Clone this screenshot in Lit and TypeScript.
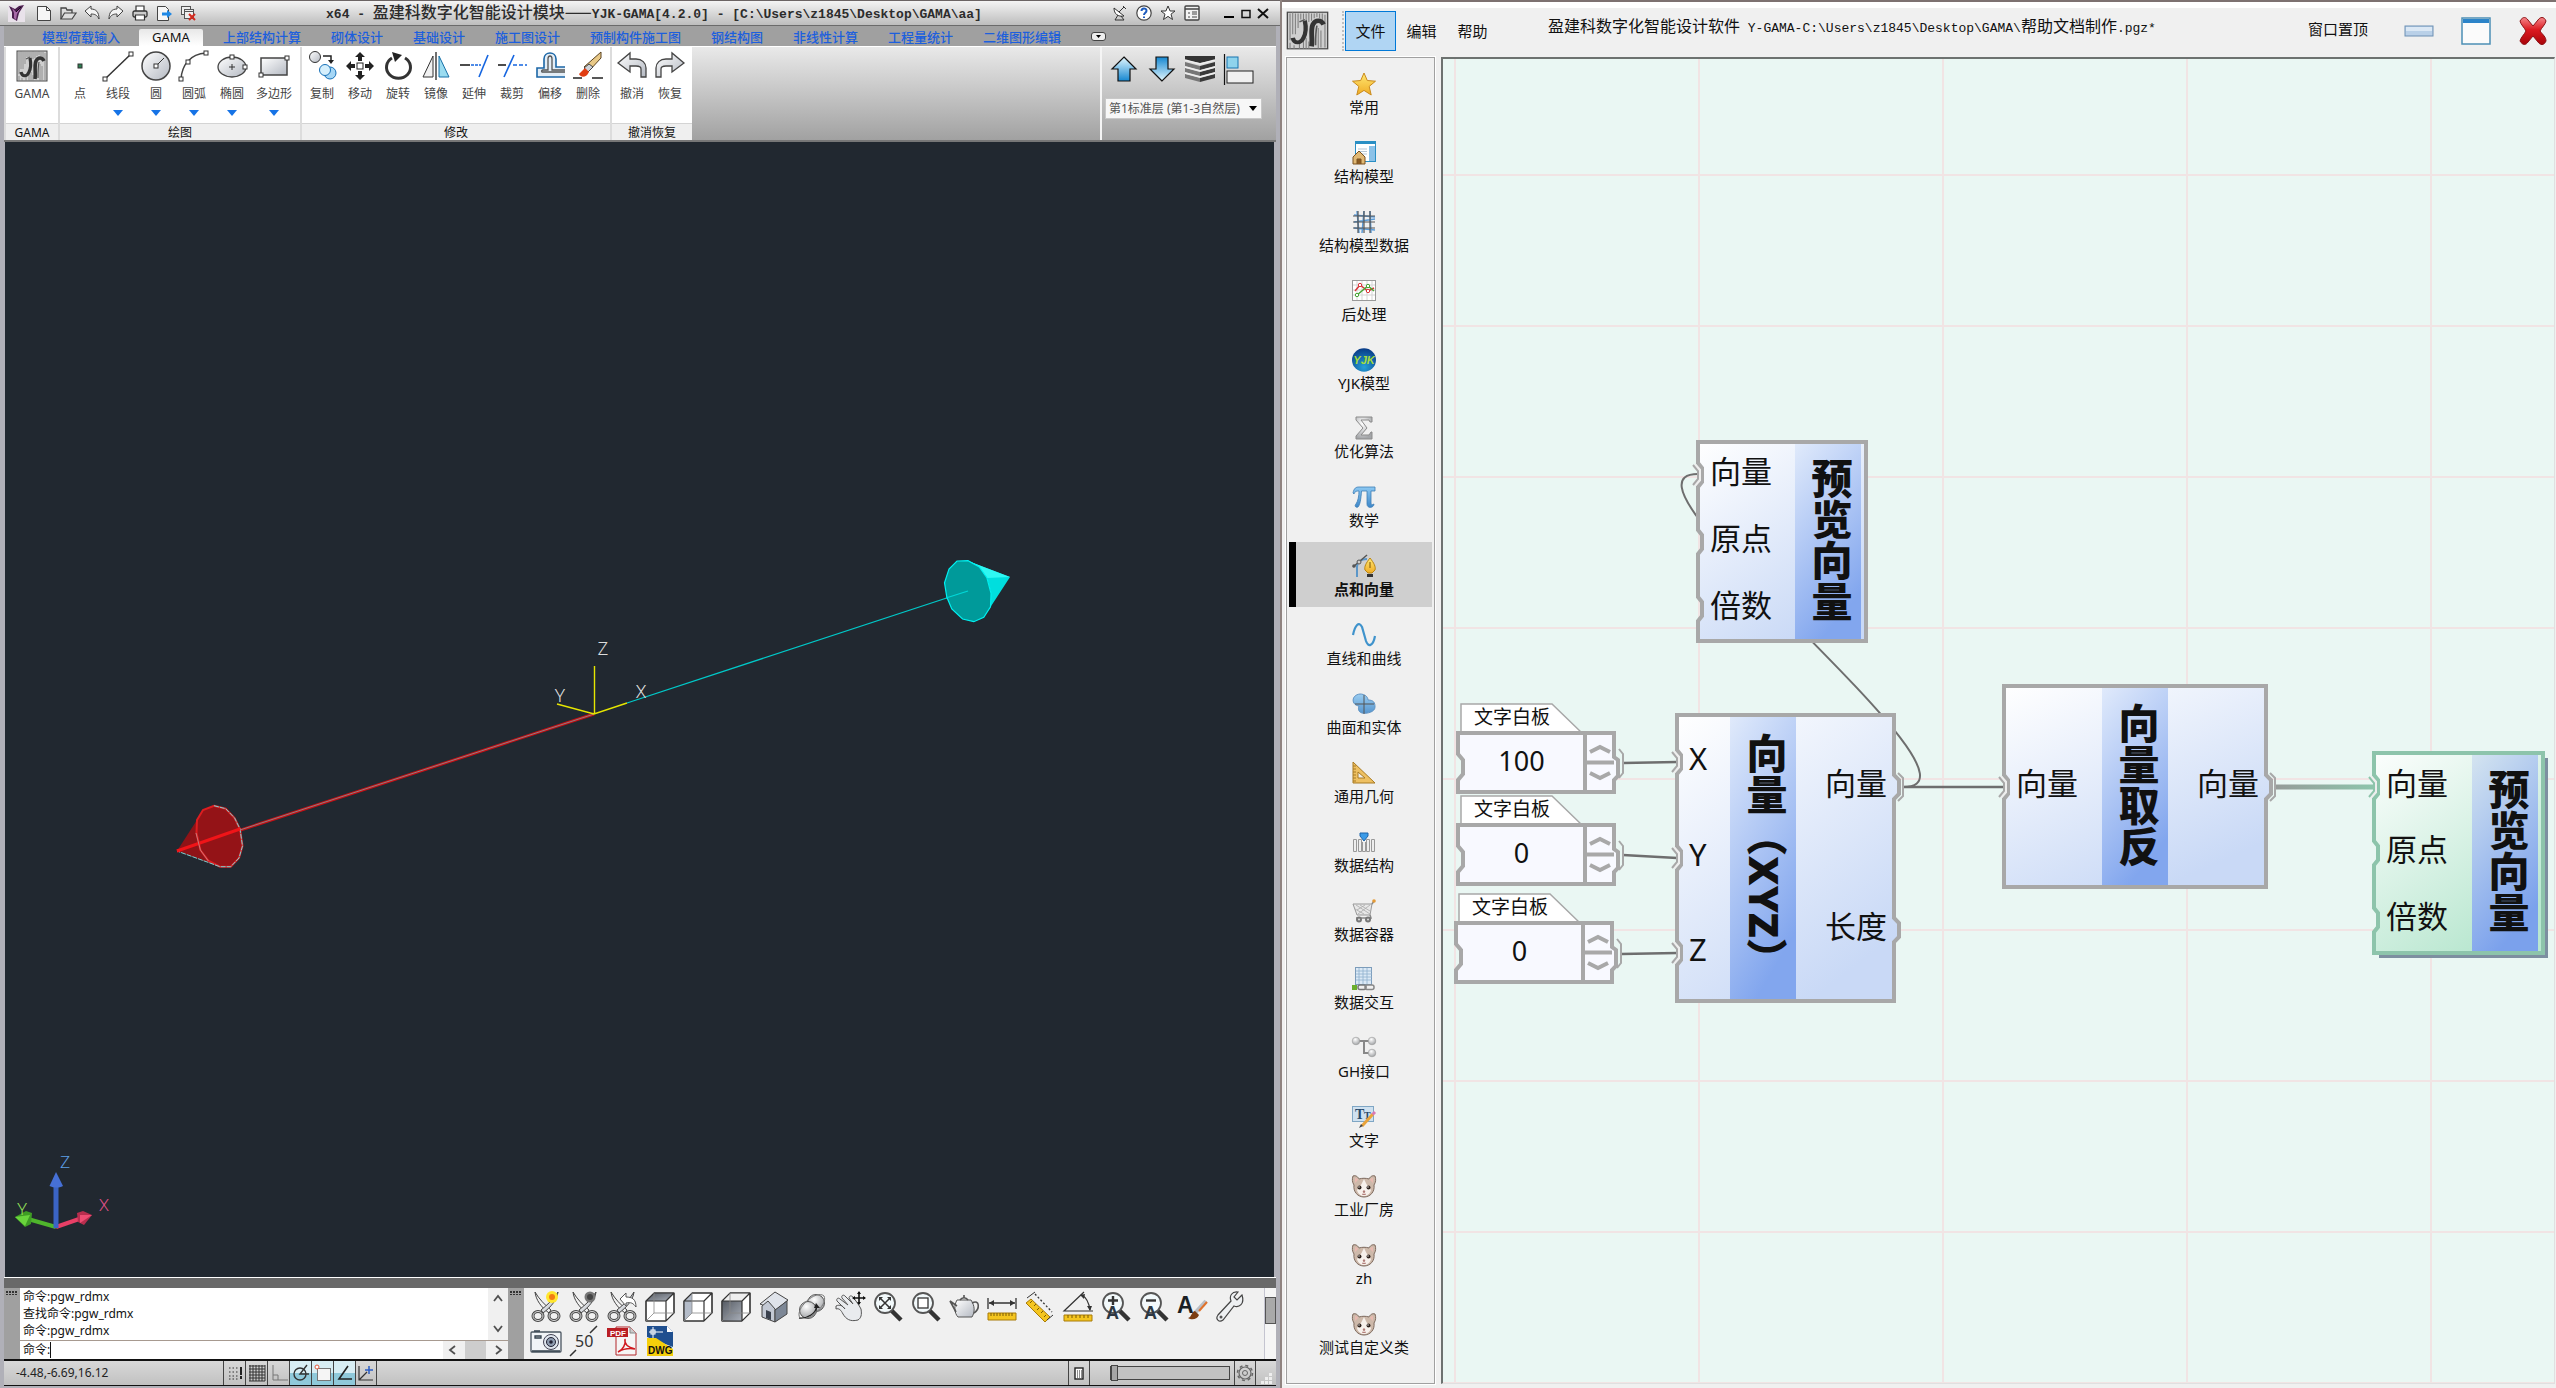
import { LitElement, html, svg, css, nothing, TemplateResult } from "lit";
import { customElement, state } from "lit/decorators.js";
import { classMap } from "lit/directives/class-map.js";
import { styleMap } from "lit/directives/style-map.js";

type Art = TemplateResult;

const icon = (size: number, art: Art, box = size): Art =>
  html`<svg class="ico" width=${size} height=${size} viewBox="0 0 ${box} ${box}" fill="none" aria-hidden="true">${art}</svg>`;

/* ---------- shared gradients, repeated in each shadow tree that needs them ---------- */
const defs = html`<svg class="defs" width="0" height="0" aria-hidden="true">
  <defs>
    <linearGradient id="steel" x1="0" y1="0" x2="1" y2="1"><stop offset="0" stop-color="#fff" /><stop offset="1" stop-color="#b4b9c2" /></linearGradient>
    <linearGradient id="aqua" x1="0" y1="0" x2="0" y2="1"><stop offset="0" stop-color="#e4f8ff" /><stop offset="1" stop-color="#1587d0" /></linearGradient>
    <linearGradient id="aquaDown" x1="0" y1="0" x2="0" y2="1"><stop offset="0" stop-color="#1587d0" /><stop offset="1" stop-color="#e4f8ff" /></linearGradient>
    <linearGradient id="gold" x1="0" y1="0" x2="0" y2="1"><stop offset="0" stop-color="#ffe873" /><stop offset="1" stop-color="#f0ac25" /></linearGradient>
    <linearGradient id="sky" x1="0" y1="0" x2="0" y2="1"><stop offset="0" stop-color="#8cc8f2" /><stop offset="1" stop-color="#3d87c9" /></linearGradient>
    <linearGradient id="dark" x1="0" y1="0" x2="1" y2="1"><stop offset="0" stop-color="#555a62" /><stop offset="1" stop-color="#a9afb9" /></linearGradient>
    <linearGradient id="ruby" x1="0" y1="0" x2="0" y2="1"><stop offset="0" stop-color="#f5868a" /><stop offset=".45" stop-color="#dc1a20" /><stop offset="1" stop-color="#a80409" /></linearGradient>
    <radialGradient id="globe" cx=".5" cy=".8" r=".8"><stop offset="0" stop-color="#25a0d8" /><stop offset="1" stop-color="#083a86" /></radialGradient>
    <radialGradient id="ball" cx=".4" cy=".3" r=".7"><stop offset="0" stop-color="#fff" /><stop offset="1" stop-color="#a3a5a8" /></radialGradient>
  </defs>
</svg>`;

/* ---------- brush lettering mark used by the GAMA tool ---------- */
const mark = svg`
  <rect x="1" y="1" width="30" height="30" fill="#cfcfcf" stroke="#4a4a4a" />
  <path d="M3 2v22M5 1v18M7 2v17M9 2v12M11 2v5M13 2v5M15 2v7M17 1v8M19 2v6M21 2v4M23 1v4M25 2v4M27 2v6M29 3v27M3 26v5M6 28v3M10 27v4M13 24v7M15 22v9M17 25v6M24 14v17M26 16v14" stroke="#808080" stroke-width=".8" />
  <path d="M14 8c1 5 1 10-1 14-2 5-7 5-8 0" stroke="#333" stroke-width="3.200" />
  <path d="M19 29c1-6-1-13 1-18 2-4 6-4 8 0" stroke="#333" stroke-width="3.600" />
  <path d="M10 9l4-2M22 28c0-6 0-11 1-16" stroke="#555" stroke-width="1.200" />`;

/* ---------- 16px title bar glyphs ---------- */
const g = {
  logo: svg`<rect width="17" height="17" fill="#e9e2ea" /><path d="M1 1l6 3 4-3 5-1-5 8-2 8-5-3 0-6z" fill="#4b1f4e" /><path d="M4 3l4 4 5-5-4 7-1 6-2-2 0-5z" fill="#a86ba8" /><path d="M8 7l5-5" stroke="#1d0b20" />`,
  file: svg`<path d="M1.500 1.500h9l4 4v10h-13z" fill="#f6f6f6" stroke="#444" /><path d="M10.500 1.500v4h4" stroke="#444" />`,
  open: svg`<path d="M1 14V3h5l1 2h5v3" stroke="#444" stroke-width="1.300" /><path d="M1 14l3.500-6H16l-4 6z" fill="#ddd" stroke="#444" stroke-width="1.200" />`,
  undo: svg`<path d="M1 6l6-5v3c5 0 8 3 8 10-2-4-4-5-8-5v3z" fill="#f4f4f4" stroke="#444" />`,
  redo: svg`<path d="M15 6L9 1v3c-5 0-8 3-8 10 2-4 4-5 8-5v3z" fill="#f4f4f4" stroke="#444" />`,
  print: svg`<path d="M4 6V1h8v5" fill="#fff" stroke="#333" stroke-width="1.200" /><rect x="1" y="6" width="14" height="6" rx="1.500" fill="#ccc" stroke="#333" stroke-width="1.300" /><path d="M3.500 10h9v5h-9z" fill="#fff" stroke="#333" stroke-width="1.200" />`,
  send: svg`<path d="M1.500 1.500h8l3 3v11h-11z" fill="#f6f6f6" stroke="#444" /><path d="M6 7.500h5V5l5 4-5 4v-2.500H6z" fill="#1e88e5" />`,
  drop: svg`<rect x="1.500" y="1.500" width="9" height="8" fill="#eee" stroke="#555" /><rect x="4.500" y="4.500" width="9" height="9" fill="#eee" stroke="#555" /><path d="M4 6.500h9" stroke="#555" /><path d="M9 9l6 6M15 9l-6 6" stroke="#d32a1e" stroke-width="2" />`,
  dish: svg`<path d="M2 3c0 6 4 9 10 8z" fill="#fff" stroke="#333" /><path d="M7 7l5-5M11 1l3 3M6 10l-3 5h9l-3-4" stroke="#333" />`,
  help: svg`<circle cx="8" cy="8" r="7.200" fill="#fff" stroke="#444" stroke-width="1.200" /><path d="M5.500 6c0-3.500 5-3.300 5-.3 0 2-2.500 2-2.500 4.300M8 11.500v1.600" stroke="#1d5bbd" stroke-width="2" />`,
  star: svg`<path d="M8 1l2.100 5H15l-4 3.200 1.500 5.300L8 11.400l-4.500 3.100L5 9.200 1 6h4.900z" fill="#fff" stroke="#333" />`,
  pane: svg`<rect x="1" y="1" width="14" height="14" rx="1" fill="#f3f3f3" stroke="#444" stroke-width="1.400" /><path d="M1 4h14" stroke="#444" stroke-width="1.500" /><path d="M4 8h2M4 12h2M8 7h5M8 9h5M8 12h5" stroke="#444" />`,
};

/* ---------- 32px ribbon tools ---------- */
const node4 = (x: number, y: number) => svg`<rect x=${x - 2} y=${y - 2} width="4" height="4" fill="#fff" stroke="#333" />`;
const r = {
  point: svg`<rect x="14" y="14" width="4" height="4" fill="#2c8052" stroke="#333" />`,
  line: svg`<path d="M3 29L29 4" stroke="#333" stroke-width="1.500" />${node4(3, 29)}${node4(29, 4)}`,
  circle: svg`<circle cx="16" cy="16" r="14" fill="url(#steel)" stroke="#444" stroke-width="1.500" /><path d="M16 16l8-8" stroke="#333" />${node4(16, 16)}`,
  arc: svg`<path d="M3 29C4 15 12 4 28 3" stroke="#444" stroke-width="1.500" />${node4(3, 29)}${node4(10, 12)}${node4(28, 3)}`,
  ellipse: svg`<ellipse cx="16" cy="17" rx="14" ry="10" fill="url(#steel)" stroke="#444" stroke-width="1.300" /><path d="M13 17h6M16 14v6" stroke="#333" />${node4(16, 7)}${node4(29, 17)}`,
  rect: svg`<rect x="3" y="8" width="26" height="17" fill="url(#steel)" stroke="#444" stroke-width="1.500" />${node4(29, 8)}${node4(3, 25)}`,
  copy: svg`<circle cx="9" cy="7" r="5.500" fill="url(#steel)" stroke="#333" /><path d="M17 6h8v6" stroke="#222" stroke-width="1.500" /><path d="M22 10h6l-3 4z" fill="#222" /><circle cx="24" cy="23" r="6" fill="#a5d6f5" stroke="#1670b8" /><circle cx="19" cy="20" r="5.500" fill="#d5effc" stroke="#1670b8" />`,
  move: svg`<rect x="13" y="13" width="6" height="6" fill="#fff" stroke="#222" /><path d="M16 2l5 5h-3v4h-4V7h-3zM16 30l5-5h-3v-4h-4v4h-3zM2 16l5-5v3h4v4H7v3zM30 16l-5-5v3h-4v4h4v3z" fill="#222" />`,
  rotate: svg`<path d="M10 8a12 11 0 1 0 13 0" stroke="#333" stroke-width="3" /><path d="M10 2l10 3-7 7z" fill="#222" />`,
  mirror: svg`<path d="M13 6v21H3z" fill="#f1f1f1" stroke="#333" /><path d="M16 2v28" stroke="#222" stroke-width="1.300" /><path d="M19 6v21h10z" fill="#9bdcf0" stroke="#1670a8" />`,
  extend: svg`<path d="M2 15h10" stroke="#111" stroke-width="1.500" /><path d="M13 15h10" stroke="#1565e0" stroke-width="1.500" stroke-dasharray="3 1" /><path d="M30 5l-9 22" stroke="#1565e0" stroke-width="1.600" />`,
  trim: svg`<path d="M2 15h8" stroke="#111" stroke-width="1.500" /><path d="M17 15h14" stroke="#1565e0" stroke-width="1.500" stroke-dasharray="4 2" /><path d="M18 5L8 27" stroke="#1565e0" stroke-width="1.600" />`,
  offset: svg`<path d="M31 27H3v-9h7V9c0-8 12-8 12 0v8h9" fill="#e3edf6" stroke="#1b66a6" stroke-width="1.600" /><path d="M31 22H8c-1-1 0-2 1-2h5V9c0-4 4-4 4 0v11h13" stroke="#555" stroke-width="1.300" />`,
  erase: svg`<path d="M1 28h9M20 28h11" stroke="#222" stroke-width="1.600" /><path d="M29 2v6L17 21l-5-4z" fill="#e9c987" stroke="#5b4320" /><path d="M17 14l4 3-5 5-4-4z" fill="#cfd3d8" stroke="#444" /><path d="M13 18l4 4c-3 6-8 6-10 2z" fill="#e13d12" />`,
  undo: svg`<path d="M2 13L14 3v6h6c6 0 10 4 10 9v9h-5v-8c0-3-3-3-5-3h-6v6z" fill="url(#steel)" stroke="#444" stroke-width="1.300" />`,
  redo: svg`<path d="M30 13L18 3v6h-6c-6 0-10 4-10 9v9h5v-8c0-3 3-3 5-3h6v6z" fill="url(#steel)" stroke="#444" stroke-width="1.300" />`,
  up: svg`<path d="M16 4l12 12h-6v12H10V16H4z" fill="url(#aqua)" stroke="#111" stroke-width="1.200" />`,
  down: svg`<path d="M16 28L4 16h6V4h12v12h6z" fill="url(#aquaDown)" stroke="#111" stroke-width="1.200" />`,
  floors: svg`<path d="M1 3h30v4l-15 3L1 7z" fill="#333" /><path d="M1 9l15 4v4L1 13zM1 15l15 4v4L1 19zM1 21l15 4v4L1 25z" fill="#777" /><path d="M31 9l-15 4v4l15-4zM31 15l-15 4v4l15-4zM31 21l-15 4v4l15-4z" fill="#3a3a3a" /><path d="M1 7l15 4 15-4M1 14l15 4 15-4M1 20l15 4 15-4" stroke="#eee" stroke-width="1.600" />`,
  align: svg`<path d="M2.500 1v31" stroke="#111" stroke-width="1.200" /><rect x="5" y="4" width="11" height="11" fill="#8fd3ec" stroke="#1774b0" /><rect x="5" y="18" width="26" height="12" fill="#f0f0f0" stroke="#222" />`,
};

/* ---------- 32px view toolbar ---------- */
const shears = svg`<path d="M5 1c1 8 6 15 14 21l2-3C15 14 9 8 5 1z" fill="#f2f2f2" stroke="#444" /><path d="M28 1c-1 8-7 15-15 21l-2-3C17 14 24 8 28 1z" fill="url(#steel)" stroke="#444" /><ellipse cx="8" cy="25" rx="5" ry="4.500" stroke="#444" stroke-width="3" /><ellipse cx="8" cy="25" rx="5" ry="4.500" stroke="#ddd" /><ellipse cx="24" cy="25" rx="5" ry="4.500" stroke="#444" stroke-width="3" /><ellipse cx="24" cy="25" rx="5" ry="4.500" stroke="#ddd" />`;
const cube = (top: string, left: string, front: string) => svg`<path d="M2 10l8-8h20v20l-8 8H2z" fill="#fff" stroke="#333" /><path d="M2 10l8-8h20l-8 8z" fill=${top} /><path d="M2 10l8-8v20l-8 8z" fill=${left} /><path d="M2 10h20v20H2z" fill=${front} /><path d="M2 10l8-8h20v20l-8 8H2zM2 10h20v20M22 10l8-8" stroke="#333" stroke-width="1.200" /><path d="M10 2v20h20M10 22l-8 8" stroke="#888" stroke-width=".8" />`;
const lens = svg`<path d="M19 19l10 10" stroke="#333" stroke-width="4.500" /><circle cx="13" cy="12" r="10" fill="#f2f9fb" stroke="#555" stroke-width="1.800" />`;
const rule = svg`<path d="M2 22h28v7H2z" fill="#f4c51f" stroke="#a87b08" /><path d="M5 22v3M8 22v3M11 22v3M14 22v3M17 22v3M20 22v3M23 22v3M26 22v3" stroke="#7a5a05" />`;
const bigA = (x: number, y: number, s: number, c: string) => svg`<text x=${x} y=${y} font-family="Liberation Sans" font-size=${s} font-weight="700" fill=${c}>A</text>`;
const v = {
  cutNew: svg`${shears}<circle cx="22" cy="6" r="6" fill="#ffe62e" /><circle cx="22" cy="6" r="3" fill="#f37d12" />`,
  cutGray: svg`${shears}<circle cx="22" cy="6" r="5.500" fill="#777" /><circle cx="22" cy="6" r="3" fill="#444" />`,
  cutBack: svg`${shears}<path d="M14 8l6-6v4c6 0 10 2 10 10-3-4-5-5-10-4v3z" fill="#fff" stroke="#555" />`,
  top: cube("url(#dark)", "none", "none"),
  left: cube("none", "#b4bcc9", "none"),
  front: cube("#eee", "#eee", "url(#dark)"),
  home: svg`<path d="M2 13L17 1l13 8-12 10z" fill="#dfe3ea" stroke="#444" /><path d="M4 15v11l13 5V18L10 10z" fill="#c3c9d4" stroke="#444" /><path d="M17 19l12-9v13l-12 8z" fill="#7d8796" stroke="#444" /><path d="M8 19l5 2v8l-5-2z" fill="#3a414d" />`,
  orbit: svg`<circle cx="20" cy="12" r="8.500" fill="url(#ball)" stroke="#555" /><circle cx="12" cy="19" r="8.500" fill="url(#ball)" stroke="#555" /><path d="M3 27c9 1 17-5 18-12" stroke="#222" stroke-width="1.400" /><path d="M20 12l-2 5 6 0z" fill="#222" /><path d="M4 27C-2 18 20-2 28 5c4 8-12 22-18 22" stroke="#777" />`,
  pan: svg`<path d="M2 15c4-2 7 0 9 3L3 10c-1-2 1-4 3-2l8 6-6-7c-1-2 1-4 3-2l8 8-4-6c0-2 2-3 4-1 3 4 6 8 8 12 1 6 0 9-3 11-8 2-12-1-15-6-2-4-4-6-7-5z" fill="#e9ebee" stroke="#555" /><path d="M25 1v12M19 7h12" stroke="#111" stroke-width="1.600" /><path d="M25 0l-2 3h4zM25 14l-2-3h4zM18 7l3-2v4zM32 7l-3-2v4z" fill="#111" />`,
  fit: svg`${lens}<path d="M8 7l10 10M18 7L8 17" stroke="#333" stroke-width="1.500" /><path d="M7 6h4l-4 4zM19 6h-4l4 4zM7 18h4l-4-4zM19 18h-4l4-4z" fill="#333" />`,
  zoomBox: svg`${lens}<rect x="8" y="7" width="10" height="10" fill="#fff" stroke="#333" stroke-width="1.300" />`,
  pot: svg`<path d="M9 9h14c4 6 4 12 1 17H10C6 22 6 14 9 9z" fill="url(#steel)" stroke="#555" /><path d="M9 15L2 10l6 11M24 12c8-4 8 6 2 10" stroke="#555" stroke-width="1.600" /><path d="M12 9c2-3 6-3 8 0M16 4v3" stroke="#555" stroke-width="1.600" />`,
  span: svg`${rule}<path d="M2 7v11M30 7v11M3 12h26" stroke="#333" stroke-width="1.300" /><path d="M3 12l5-3v6zM29 12l-5-3v6z" fill="#333" />`,
  slant: svg`<path d="M2 12l5-4 19 18-5 5z" fill="#f4c51f" stroke="#a87b08" /><path d="M6 12l2-2M10 15l2-2M13 19l2-2M17 22l2-2M20 26l2-2" stroke="#7a5a05" /><path d="M3 7l8-6M23 29l6-5" stroke="#333" /><path d="M11 3l17 18" stroke="#333" stroke-dasharray="2 2" stroke-width="1.300" />`,
  angle: svg`<path d="M2 24h28v6H2z" fill="#f4c51f" stroke="#a87b08" /><path d="M6 24v3M10 24v3M14 24v3M18 24v3M22 24v3M26 24v3" stroke="#7a5a05" /><path d="M31 20H2L22 1M20 4c5 3 7 8 8 15" stroke="#333" stroke-width="1.200" /><path d="M18 4l5-1-1 5zM28 20l-3-5h5z" fill="#333" />`,
  bigger: svg`${lens}<path d="M13 5v9M8 9.500h10" stroke="#333" stroke-width="2.400" />${bigA(6, 28, 18, "#2c3742")}`,
  smaller: svg`${lens}<path d="M8 9.500h10" stroke="#333" stroke-width="2.400" />${bigA(6, 28, 18, "#2c3742")}`,
  style: svg`${bigA(1, 22, 23, "#1b1f24")}<path d="M30 10L19 22" stroke="#b9bec5" stroke-width="4" /><path d="M31 11l-8 9" stroke="#e0712a" stroke-width="2" /><path d="M19 20l4 4c-2 5-8 5-11 3 4-1 3-6 7-7z" fill="#7c3d12" />`,
  wrench: svg`<path d="M28 4l-5 5-3-3 4-5c-6-1-9 4-7 9L4 24c-3 4 1 8 5 5l11-14c5 2 11-2 8-11z" fill="#eef0f2" stroke="#444" stroke-width="1.200" /><circle cx="7" cy="26" r="1.500" fill="#555" />`,
  camera: svg`<rect x="1" y="7" width="30" height="20" rx="1" fill="#f1f4f7" stroke="#4a5560" stroke-width="1.300" /><path d="M4 6h6M5 11h6v2H5zM2 26h28" stroke="#33404c" stroke-width="1.300" /><circle cx="21" cy="17" r="7.500" fill="#dfe6ee" stroke="#445" /><circle cx="21" cy="17" r="4.500" fill="#8e9cb0" stroke="#223" /><circle cx="21" cy="17" r="1.800" fill="#223" />`,
  fifty: svg`<path d="M22 8l7-7M2 31l6-6" stroke="#333" stroke-width="1.500" /><text x="7" y="22" font-family="Noto Sans" font-size="16" fill="#333">50</text>`,
  pdf: svg`<path d="M10 2h14l6 6v22H10z" fill="#f5f5f5" stroke="#b3262b" /><path d="M24 2v6h6" fill="#ccc" stroke="#888" /><path d="M1 3h21v9H1z" fill="#b91e24" /><text x="4" y="11" font-family="Liberation Sans" font-size="8" font-weight="700" fill="#fff">PDF</text><path d="M12 27c5-2 8-8 7-13-1 6 5 9 10 10-6-1-12 0-17 3z" stroke="#d0191f" stroke-width="1.500" />`,
  dwg: svg`<path d="M3 1h20l6 6v15L3 12z" fill="#1f4f8f" /><path d="M3 13h9l17 11v7H3z" fill="#f5cf0b" /><path d="M5 7h14M9 2v11" stroke="#fff" /><rect x="7" y="5" width="4" height="4" stroke="#fff" /><path d="M23 1v6h6z" fill="#fff" /><text x="4" y="29" font-family="Liberation Sans" font-size="10" font-weight="700" fill="#111">DWG</text>`,
};

/* ---------- 18px status toggles ---------- */
const s = {
  snap: svg`<path d="M3 4h9M3 8h9M3 12h9M3 15h9" stroke="#333" stroke-width="1.200" stroke-dasharray="1.500 2" /><path d="M15 3v12" stroke="#222" stroke-width="2" stroke-dasharray="8 1" />`,
  grid: svg`<path d="M1 2h16M1 5h16M1 8h16M1 11h16M1 14h16M1 17h16M2 1v16M5 1v16M8 1v16M11 1v16M14 1v16M17 1v16" stroke="#333" />`,
  ortho: svg`<path d="M3 1v15h15M3 11h5v5" stroke="#777" />`,
  polar: svg`<circle cx="8" cy="10" r="6" stroke="#333" stroke-width="1.400" /><path d="M15 1L8 10h9" stroke="#333" stroke-width="1.400" />`,
  osnap: svg`<rect x="3.500" y="4.500" width="13" height="12" fill="#f5f5f5" stroke="#777" /><circle cx="3" cy="3" r="2" fill="#fff" stroke="#e2583a" />`,
  track: svg`<path d="M12 2L3 15h13" stroke="#222" stroke-width="1.600" />`,
  ucs: svg`<path d="M2 2v14h14M2 16l8-8" stroke="#333" stroke-width="1.200" /><path d="M12 2v8M8 6h8" stroke="#2a5cc4" stroke-width="1.500" />`,
  sheet: svg`<rect x="5" y="4" width="8" height="11" fill="#fff" stroke="#222" stroke-width="1.400" /><path d="M7 7h5M7 9h5M7 11h5M7 13h5" stroke="#222" stroke-dasharray="1 1" />`,
  gear: svg`<circle cx="9" cy="9" r="6" stroke="#666" stroke-width="1.200" /><circle cx="9" cy="9" r="7.500" stroke="#666" stroke-width="1.500" stroke-dasharray="3 2.900" /><circle cx="9" cy="9" r="2.500" stroke="#666" />`,
};

/* ---------- 24px category icons ---------- */
const cat = svg`<path d="M1 2c3-1 5 1 6 3 3-1 7-1 10 0 1-2 3-4 6-3 1 3 1 6-1 9 1 7-4 12-10 12S1 18 2 11C0 8 0 5 1 2z" fill="#cdb9aa" stroke="#7d695d" /><path d="M3 4c2 0 3 1 3 2L3 9zM21 4c-2 0-3 1-3 2l3 3z" fill="#e8b9b0" /><path d="M12 5c-2 4-3 7-7 11 1 4 4 6 7 6s6-2 7-6c-4-4-5-7-7-11z" fill="#f7f1ec" /><circle cx="7.500" cy="13.500" r="2" fill="#2d211c" /><circle cx="16.500" cy="13.500" r="2" fill="#2d211c" /><circle cx="7" cy="13" r=".7" fill="#fff" /><circle cx="16" cy="13" r=".7" fill="#fff" /><path d="M11 17h2l-1 1.500zM12 18v1.500M10 20c1 .8 3 .8 4 0" stroke="#a0605c" stroke-width=".8" />`;
const n = {
  star: svg`<path d="M12 1l3.300 7.500 8.200.7-6.300 5.200 2 8.600-7.200-4.600L4.800 23l2-8.600L.5 9.200l8.200-.7z" fill="url(#gold)" stroke="#c98a1d" />`,
  model: svg`<rect x="3.500" y=".500" width="20" height="20" fill="#fff" stroke="#2a8fc4" /><path d="M4 2h19" stroke="#2a8fc4" stroke-width="2" /><path d="M6 8h9M6 10.500h9M6 13h9" stroke="#b7c7d4" /><path d="M17 5h6v15h-6z" fill="#8cc2e8" /><path d="M1 16l6-6 6 6v7H1z" fill="#e0b874" stroke="#7b5220" /><path d="M5 23v-5h4v5" stroke="#7b5220" fill="#8b5b22" />`,
  data: svg`<path d="M2 5l21 2M2 12l21-3M2 18l21 2M5 1l2 22M12 1l-2 22M18 1l1 22" stroke="#5a9bd8" stroke-width="1.500" /><path d="M1 6h22M1 12h22M1 18h22M6 1v22M12 1v22M18 1v22" stroke="#555" stroke-width="1.200" />`,
  chart: svg`<rect x=".500" y="1.500" width="23" height="20" fill="#fff" stroke="#999" /><path d="M1 6h22M1 11h22M1 16h22M5 2v19M10 2v19M15 2v19M20 2v19" stroke="#d5d5d5" /><path d="M3 12l5-6 8 6 6-3" stroke="#d9363a" stroke-width="1.500" /><path d="M5 16l6-5 5-4 6 5" stroke="#46a532" stroke-width="1.500" /><circle cx="8" cy="6" r="1.700" fill="#fff" stroke="#d9363a" /><circle cx="16" cy="12" r="1.700" fill="#fff" stroke="#d9363a" /><circle cx="5" cy="16" r="1.700" fill="#fff" stroke="#46a532" /><circle cx="16" cy="7" r="1.700" fill="#fff" stroke="#46a532" />`,
  yjk: svg`<ellipse cx="12" cy="12" rx="12" ry="11.800" fill="url(#globe)" /><text x="12" y="16" text-anchor="middle" font-family="Liberation Sans" font-size="11" font-style="italic" font-weight="700" fill="#a6dc3c">YJK</text>`,
  sigma: svg`<path d="M4 1h16v5h-2l-1-2H9l6 8-6 7h8l2-3h1v7H4v-3l7-8-7-8z" fill="url(#ball)" stroke="#8b8b8b" />`,
  pi: svg`<path d="M1 8c1-5 3-6 6-6h16v4h-4v12c0 2 1 2 3 1 0 4-7 5-7 0V6H9.500C9 14 8 20 6 22c-2 1-4-1-2-3 2-3 3-8 3-13-2 0-4 0-5 3z" fill="url(#sky)" stroke="#3d7db5" stroke-width=".8" />`,
  pen: svg`<path d="M5 23V13c0-5 4-8 10-8" stroke="#5b96c8" stroke-width="2" /><path d="M1 13L15 1" stroke="#555" stroke-width="1.500" /><circle cx="2" cy="12" r="1.800" fill="#555" /><circle cx="7" cy="8" r="2" fill="#ccc" stroke="#555" /><path d="M18 4c4 5 6 9 5 12l-3 3h-4l-3-3c-1-3 1-7 5-12z" fill="url(#gold)" stroke="#b98412" /><path d="M18 8v6" stroke="#7a5505" /><path d="M15 20h6v3h-6z" fill="#333" />`,
  wave: svg`<path d="M1 12C3 2 7-2 10 4l4 14c2 6 7 6 9-5" stroke="#3f93cc" stroke-width="2.200" />`,
  blob: svg`<path d="M8 2c5 0 8 3 8 6 6 0 7 3 7 7 0 5-8 7-13 6-4-1-4-5-3-7C-1 13-1 3 8 2z" fill="url(#sky)" stroke="#4985bd" opacity=".85" /><path d="M12 3v19M3 12h19" stroke="#555" />`,
  square: svg`<path d="M1 1v21h22z" fill="#eec062" stroke="#a87a22" /><path d="M6 11v6h7z" fill="#efefef" stroke="#a87a22" /><path d="M1 5h3M1 8h3M1 11h3M1 14h3M1 17h3M1 20h3" stroke="#a87a22" />`,
  struct: svg`<path d="M1.500 9.500h3v12h-3zM6.500 9.500h3v12h-3zM14.500 9.500h3v12h-3zM19.500 9.500h3v12h-3z" fill="#eee" stroke="#999" /><path d="M10.500 12v9.500h3V12" fill="#eee" stroke="#999" /><path d="M8 3h8v3l-4 5-4-5z" fill="#3b9be8" stroke="#1d65aa" />`,
  cart: svg`<path d="M1 5l19 0-2 11H5z" fill="#e8e8e8" stroke="#999" /><path d="M4 6l14 9M8 6l10 6M3 10l9 5M6 15l12-9M5 11l8-5" stroke="#aaa" stroke-width=".8" /><path d="M20 5l2-3M4 19h15l-1-3" stroke="#888" stroke-width="1.500" /><circle cx="22" cy="2" r="1.800" fill="#e49a36" /><circle cx="7" cy="20.500" r="3" fill="#777" /><circle cx="16" cy="20.500" r="3" fill="#777" /><circle cx="7" cy="20.500" r="1" fill="#ddd" /><circle cx="16" cy="20.500" r="1" fill="#ddd" />`,
  link: svg`<rect x="3.500" y=".500" width="16" height="17" fill="#dbe9f6" stroke="#7c9cba" /><path d="M4 4h16M4 7h16M4 10h16M4 13h16M7 1v16M11 1v16M15 1v16" stroke="#8fb0ce" stroke-width=".8" /><path d="M0 18h5v5H0z" fill="#6bae2c" /><rect x="6" y="18" width="8" height="4.500" rx="2" stroke="#777" stroke-width="1.500" /><rect x="13" y="18" width="9" height="4.500" rx="2" stroke="#888" stroke-width="1.500" />`,
  tree: svg`<path d="M5 5h14M12 5v12h8" stroke="#888" stroke-width="2" /><circle cx="4" cy="5" r="3.800" fill="url(#ball)" stroke="#999" stroke-width=".6" /><circle cx="20" cy="5" r="3.800" fill="url(#ball)" stroke="#999" stroke-width=".6" /><circle cx="20" cy="17" r="3.800" fill="url(#ball)" stroke="#999" stroke-width=".6" />`,
  text: svg`<rect x=".500" y="1.500" width="21" height="15" fill="#cfe1f0" stroke="#7fa6c4" /><text x="3" y="14" font-family="Liberation Serif" font-size="14" font-weight="700" fill="#27496b">T</text><text x="12" y="14" font-family="Liberation Serif" font-size="10" font-weight="700" fill="#27496b">T</text><path d="M10 21L21 9" stroke="#e9a33a" stroke-width="3" /><path d="M20.500 9.500L23 7" stroke="#d979b5" stroke-width="3" /><path d="M7 23l2-4 2 2z" fill="#444" />`,
  cat,
};

const categories: [keyof typeof n, string][] = [
  ["star", "常用"], ["model", "结构模型"], ["data", "结构模型数据"], ["chart", "后处理"], ["yjk", "YJK模型"],
  ["sigma", "优化算法"], ["pi", "数学"], ["pen", "点和向量"], ["wave", "直线和曲线"], ["blob", "曲面和实体"],
  ["square", "通用几何"], ["struct", "数据结构"], ["cart", "数据容器"], ["link", "数据交互"], ["tree", "GH接口"],
  ["text", "文字"], ["cat", "工业厂房"], ["cat", "zh"], ["cat", "测试自定义类"],
];

const baseStyles = css`
  * { box-sizing: border-box; }
  button, input, select { font: inherit; color: inherit; margin: 0; }
  button { border: 0; background: none; padding: 0; cursor: pointer; }
  .ico { display: block; flex: none; overflow: visible; }
  .defs { position: absolute; }
`;

/* ================= modelling window ================= */
interface Tool { art: Art; label: string; menu?: boolean; }
const groups: { name: string; tools: Tool[] }[] = [
  { name: "GAMA", tools: [{ art: mark, label: "GAMA" }] },
  { name: "绘图", tools: [
    { art: r.point, label: "点" }, { art: r.line, label: "线段", menu: true }, { art: r.circle, label: "圆", menu: true },
    { art: r.arc, label: "圆弧", menu: true }, { art: r.ellipse, label: "椭圆", menu: true }, { art: r.rect, label: "多边形", menu: true }] },
  { name: "修改", tools: [
    { art: r.copy, label: "复制" }, { art: r.move, label: "移动" }, { art: r.rotate, label: "旋转" }, { art: r.mirror, label: "镜像" },
    { art: r.extend, label: "延伸" }, { art: r.trim, label: "裁剪" }, { art: r.offset, label: "偏移" }, { art: r.erase, label: "删除" }] },
  { name: "撤消恢复", tools: [{ art: r.undo, label: "撤消" }, { art: r.redo, label: "恢复" }] },
];
const tabs = ["模型荷载输入", "GAMA", "上部结构计算", "砌体设计", "基础设计", "施工图设计", "预制构件施工图", "钢结构图", "非线性计算", "工程量统计", "二维图形编辑"];

@customElement("model-window")
export class ModelWindow extends LitElement {
  @state() private tab = "GAMA";

  static styles = [baseStyles, css`
    :host { display: flex; flex-direction: column; min-width: 0; background: #b0b0b8; font: 12px/16px "Noto Sans", "Noto Sans CJK SC", sans-serif; color: #222; }
    .title { display: flex; align-items: center; height: 26px; padding: 0 12px 0 8px; border-top: 1px solid #6b6464; border-bottom: 1px solid #6b6b6b; background: linear-gradient(#f4f4f4, #bdbdbd); }
    .quick { display: flex; gap: 8px; align-items: center; }
    .quick .brand { margin-right: 3px; }
    .caption { flex: 1; text-align: center; white-space: nowrap; font: 700 13px/20px "Liberation Mono", monospace; color: #2c2c2c; }
    .cjk { font-family: "Noto Sans CJK SC", sans-serif; font-size: 16px; font-weight: 500; }
    .winbtns { display: flex; gap: 7px; margin-left: 24px; }
    .frame { flex: 1; display: flex; flex-direction: column; min-height: 0; padding: 0 4px 2px; }
    .tabs { display: flex; height: 20px; background: #a0a0a0; padding-left: 23px; align-items: flex-end; font-size: 13px; color: #1d5fdd; white-space: nowrap; }
    .tab { height: 20px; padding: 0 15px; line-height: 22px; font-weight: 500; }
    .tab.on { height: 17px; padding: 0 13px; margin: 0 5px 0 4px; line-height: 17px; font-weight: 400; color: #111; background: linear-gradient(#e8e8e8, #fff); border-radius: 2px 2px 0 0; }
    .more { align-self: center; margin-left: 15px; width: 15px; height: 9px; border: 1px solid #444; border-radius: 3px; background: #eee; display: grid; place-items: center; }
    .ribbon { display: flex; height: 96px; background: linear-gradient(#e9e9e9, #a1a1a1); border-top: 1px solid #fff; border-bottom: 2px solid #777; }
    .group { display: flex; flex-direction: column; border-left: 2px solid #dcdcdc; background: #fff; }
    .tools { flex: 1; display: flex; padding: 3px 3px 0 1px; }
    .group:first-child .tools { padding: 3px 7px 0; }
    .group .name { height: 17px; line-height: 17px; text-align: center; background: #efefef; border-top: 1px solid #d4d4d4; color: #111; }
    .tool { display: flex; flex-direction: column; align-items: center; min-width: 38px; gap: 4px; white-space: nowrap; color: #444; }
    .tool.wide { min-width: 46px; }
    .tool .caret { margin-top: 4px; }
    .floors { margin-left: auto; border-left: 2px solid #f5f5f5; padding: 6px 14px 0 3px; width: 176px; }
    .row { display: flex; gap: 6px; padding-left: 3px; }
    .pick { position: relative; margin-top: 13px; }
    .pick select { display: block; appearance: none; width: 100%; height: 21px; padding: 0 3px; border: 1px solid #c8c8c8; border-radius: 0; background: #f7f7f7; color: #555; font-size: 12px; }
    .pick svg { position: absolute; right: 5px; top: 8px; pointer-events: none; }
    .view { flex: 1; min-height: 0; margin: 0 2px 0 1px; background: #212830; }
    .view svg { display: block; width: 100%; height: 100%; }
    .axis { font-family: Roboto, "Noto Sans", sans-serif; font-weight: 300; }
    .gap { flex: none; height: 11px; border-top: 1px solid #fff; background: #696969; }
    .dock { flex: none; display: flex; height: 71px; background: #f0f0f0; }
    .grip { flex: none; width: 16px; background: #a0a0a0; padding: 3px 2px; }
    .dots { width: 12px; height: 4px; background: radial-gradient(circle at 1px 1px, #333 1px, transparent 1px) 0 0 / 3px 3px; }
    .command { flex: 493 1 0; display: flex; flex-direction: column; background: #fff; color: #111; }
    .log { display: flex; height: 53px; border-bottom: 1px solid #a79a90; }
    .log ol { flex: 1; list-style: none; margin: 0; padding: 0 3px; line-height: 17px; }
    .vbar { width: 20px; background: #f0f0f0; display: flex; flex-direction: column; justify-content: space-between; align-items: center; padding: 6px 0; }
    .entry { flex: 1; display: flex; align-items: center; padding-left: 3px; }
    .entry input { flex: 1; min-width: 0; border: 0; border-left: 1px solid #111; padding: 0; height: 16px; outline: 0; background: none; }
    .hbar { width: 65px; align-self: stretch; background: #f0f0f0; display: flex; align-items: center; justify-content: space-between; padding: 0 5px; }
    .thumb { width: 21px; height: 100%; background: #cdcdcd; }
    .toolbar { flex: 735 1 0; display: flex; flex-wrap: wrap; align-content: flex-start; gap: 2px 6px; padding: 3px 6px; }
    .scroll { width: 12px; background: #f5f5f5; border-left: 1px solid #c4c4d0; padding-top: 9px; }
    .scroll div { height: 27px; background: #a9a9a9; border: 1px solid #555; }
    .status { flex: none; display: flex; align-items: stretch; height: 27px; border-top: 2px solid #111; border-bottom: 1px solid #111; background: linear-gradient(#d8d8d8, #c1c1c1); }
    .pos { width: 219px; padding-left: 12px; line-height: 24px; }
    .tog { width: 22px; border-left: 1px solid #444; display: grid; place-items: center; }
    .tog.on { background: linear-gradient(#d8eef4 50%, #8fc9da 50%); }
    .tog:last-of-type { border-right: 1px solid #444; }
    .tail { margin-left: auto; display: flex; align-items: center; padding-right: 3px; }
    .tail .tog { align-self: stretch; border-right: 1px solid #444; }
    .tail input { appearance: none; width: 120px; height: 14px; margin: 0 4px 0 20px; border: 1px solid #444; background: #c2c2c2; }
    .tail input::-webkit-slider-thumb { appearance: none; width: 7px; height: 16px; background: #a5a5a5; border: 1px solid #444; }
    .size { margin-left: 5px; align-self: flex-end; }
  `];

  private tool(t: Tool) {
    return html`<button class=${classMap({ tool: true, wide: t.label.length === 3 })}>
      ${icon(32, t.art)}<span>${t.label}</span>
      ${t.menu ? html`<svg class="caret" width="10" height="6" viewBox="0 0 10 6"><path d="M0 0h10L5 6z" fill="#1673e6" /></svg>` : nothing}
    </button>`;
  }

  render() {
    const tick = (d: string) => html`<svg width="10" height="10" viewBox="0 0 10 10" fill="none"><path d=${d} stroke="#505050" stroke-width="1.800" /></svg>`;
    return html`${defs}
      <header class="title">
        <div class="quick">
          <svg class="ico brand" width="17" height="17" viewBox="0 0 17 17" fill="none">${g.logo}</svg>
          ${[["新建", g.file], ["打开", g.open], ["撤消", g.undo], ["恢复", g.redo], ["打印", g.print], ["输出", g.send], ["关闭", g.drop]].map(
            ([name, art]) => html`<button aria-label=${name}>${icon(16, art as Art)}</button>`)}
        </div>
        <div class="caption">x64 - <span class="cjk">盈建科数字化智能设计模块——</span>YJK-GAMA[4.2.0] - [C:\\Users\\z1845\\Desktop\\GAMA\\aa]</div>
        <div class="quick">
          ${[["通讯", g.dish], ["帮助", g.help], ["收藏", g.star], ["面板", g.pane]].map(
            ([name, art]) => html`<button aria-label=${name}>${icon(16, art as Art)}</button>`)}
        </div>
        <div class="winbtns">
          <button aria-label="最小化"><svg class="ico" width="10" height="10" viewBox="0 0 10 10"><path d="M0 8h10v2H0z" /></svg></button>
          <button aria-label="最大化"><svg class="ico" width="10" height="10" viewBox="0 0 10 10"><path d="M1 2.500h8v7H1z" fill="none" stroke="#111" stroke-width="1.500" /></svg></button>
          <button aria-label="关闭"><svg class="ico" width="10" height="10" viewBox="0 0 10 10"><path d="M0 1l10 9M10 1L0 10" stroke="#111" stroke-width="2" /></svg></button>
        </div>
      </header>
      <div class="frame">
        <nav class="tabs">
          ${tabs.map((t) => html`<button class=${classMap({ tab: true, on: t === this.tab })} @click=${() => (this.tab = t)}>${t}</button>`)}
          <button class="more" aria-label="更多"><svg width="5" height="3" viewBox="0 0 5 3"><path d="M0 0h5L2.500 3z" /></svg></button>
        </nav>
        <div class="ribbon">
          ${groups.map((gr) => html`<section class="group"><div class="tools">${gr.tools.map((t) => this.tool(t))}</div><div class="name">${gr.name}</div></section>`)}
          <section class="floors">
            <div class="row">
              ${[["上层", r.up], ["下层", r.down], ["楼层", r.floors], ["对齐", r.align]].map(
                ([name, art]) => html`<button aria-label=${name}>${icon(32, art as Art)}</button>`)}
            </div>
            <div class="pick">
              <select aria-label="标准层"><option>第1标准层 (第1-3自然层)</option></select>
              <svg width="8" height="5" viewBox="0 0 8 5"><path d="M0 0h8L4 5z" /></svg>
            </div>
          </section>
        </div>
        <div class="view">${this.scene()}</div>
        <div class="gap"></div>
        <div class="dock">
          <div class="grip"><div class="dots"></div></div>
          <section class="command">
            <div class="log">
              <ol><li>命令:pgw_rdmx</li><li>查找命令:pgw_rdmx</li><li>命令:pgw_rdmx</li></ol>
              <div class="vbar">${tick("M1 7l4-5 4 5")}${tick("M1 2l4 5 4-5")}</div>
            </div>
            <div class="entry">
              <label for="cmd">命令:</label><input id="cmd" />
              <div class="hbar">${tick("M7 1L2 5l5 4")}<div class="thumb"></div>${tick("M3 1l5 4-5 4")}</div>
            </div>
          </section>
          <div class="grip"><div class="dots"></div></div>
          <div class="toolbar">
            ${Object.entries(v).map(([name, art]) => html`<button aria-label=${name}>${icon(32, art)}</button>`)}
          </div>
          <div class="scroll"><div></div></div>
        </div>
        <footer class="status">
          <div class="pos">-4.48,-6.69,16.12</div>
          ${[s.snap, s.grid, s.ortho, s.polar, s.osnap, s.track, s.ucs].map(
            (art, i) => html`<button class=${classMap({ tog: true, on: i > 2 && i < 6 })} aria-label="状态${i + 1}">${icon(18, art)}</button>`)}
          <div class="tail">
            <button class="tog" aria-label="图纸">${icon(18, s.sheet)}</button>
            <input type="range" value="0" aria-label="透明度" />
            <button class="tog" aria-label="设置">${icon(18, s.gear)}</button>
            <svg class="size" width="12" height="12" viewBox="0 0 12 12"><path d="M8 0h3v3H8zM4 4h3v3H4zM8 4h3v3H8zM0 8h3v3H0zM4 8h3v3H4zM8 8h3v3H8z" fill="#eee" /></svg>
          </div>
        </footer>
      </div>`;
  }

  private scene() {
    return html`<svg viewBox="0 0 1269 1135" preserveAspectRatio="xMidYMid slice" fill="none">
      <g transform="translate(-5 -142)">
        <path d="M627 703L968 591" stroke="#00c9c9" stroke-width="1.300" />
        <path d="M968 561l42 16-19.500 30 .5-14-4-15-8-11z" fill="#00dede" /><path d="M968 561l42 16-23 1-8-11z" fill="#2ff7f2" />
        <path d="M957 561l11-.3 11.300 6.300 7.700 11 4 15.300-.5 13.400-6.700 10.600-10 4.400-11.200-2.700-10.800-10-5-12-2.300-14.300 4.500-13.700z" fill="#009a9a" stroke="#00f0f0" stroke-width="1.200" />
        <path d="M946 598l22-7" stroke="#00d8d8" stroke-width="1.300" />
        <path d="M594 714L177 851" stroke="#c80e14" stroke-width="3" /><path d="M594 714L240 830" stroke="#8c8080" stroke-width="1" />
        <path d="M177 851l20-31 23 47z" fill="#8f1317" />
        <path d="M214 805.700l11.700 3 8.900 9.300 5.400 11 2.500 17-3.500 12-8.300 8.700H220l-11.700-6-7.900-10.700-3.900-17 .5-13 6-10z" fill="#941317" stroke="#dc1d20" stroke-width="2" />
        <path d="M214 805.700l11.700 3 8.900 9.300 5.400 11 2.500 17-3.500 12-8.300 8.700H220L177 851" stroke="#77d4d4" stroke-width="1" stroke-dasharray="5 1" />
        <path d="M177 851l63-22" stroke="#f01418" stroke-width="3" />
        <path d="M196 833l4.400 17 8 11" stroke="#c77" stroke-width="1" />
        <path d="M594.500 666v48M557 704l37 10 33-11" stroke="#e6e600" stroke-width="1.400" />
        <g class="axis" font-size="18" fill="#dcdcdc" text-anchor="middle"><text x="603" y="655">Z</text><text x="560" y="702">Y</text><text x="641" y="698">X</text></g>
        <path d="M56 1227l-28-8" stroke="#4fb52c" stroke-width="4" /><path d="M15 1217l11-6 6 2-1 11-6 3z" fill="#3e9c24" /><path d="M15 1217l15-2-5 11z" fill="#69d43c" />
        <path d="M56 1227l26-9" stroke="#e83f66" stroke-width="4" /><path d="M92 1215l-9-4-6 2 1 9 6 3z" fill="#b82e4e" /><path d="M92 1215l-12 0 0 8z" fill="#ee4d73" />
        <path d="M56 1228v-44" stroke="#3b64c4" stroke-width="5" /><path d="M56 1172l7 14c-4 2-9 2-13.500 0z" fill="#4670d6" />
        <g class="axis" font-size="17" text-anchor="middle"><text x="65" y="1168" fill="#5d9fe6">Z</text><text x="22" y="1215" fill="#8fdc58">Y</text><text x="104" y="1211" fill="#dc4f86">X</text></g>
      </g>
    </svg>`;
  }
}

/* ================= node editor window ================= */
interface Port { label: string; y: number; on?: boolean; }
interface GraphNode { title: string; x: number; y: number; w: number; h: number; band: number; ins: Port[]; outs: Port[]; picked?: boolean; }
const nodes: GraphNode[] = [
  { title: "预览向量", x: 253, y: 381, w: 172, h: 203, band: 99, ins: [{ label: "向量", y: 35, on: true }, { label: "原点", y: 102 }, { label: "倍数", y: 169 }], outs: [] },
  { title: "向量（XYZ）", x: 232, y: 654, w: 221, h: 290, band: 55, ins: [{ label: "X", y: 49, on: true }, { label: "Y", y: 145, on: true }, { label: "Z", y: 240, on: true }], outs: [{ label: "向量", y: 74, on: true }, { label: "长度", y: 217 }] },
  { title: "向量取反", x: 559, y: 625, w: 266, h: 205, band: 100, ins: [{ label: "向量", y: 103, on: true }], outs: [{ label: "向量", y: 103, on: true }] },
  { title: "预览向量", x: 929, y: 692, w: 173, h: 204, band: 100, ins: [{ label: "向量", y: 36, on: true }, { label: "原点", y: 102 }, { label: "倍数", y: 169 }], outs: [], picked: true },
];
const panels = [{ x: 13, y: 644, value: "100" }, { x: 13, y: 736, value: "0" }, { x: 11, y: 834, value: "0" }];

@customElement("node-window")
export class NodeWindow extends LitElement {
  @state() private active = "点和向量";

  static styles = [baseStyles, css`
    :host { display: flex; flex-direction: column; min-width: 0; background: #f0f0f0; border-left: 2px solid #8f8380; font: 15px/20px "Noto Sans", "Noto Sans CJK SC", sans-serif; color: #111; }
    .bar { flex: none; display: flex; align-items: center; height: 57px; padding: 2px 8px 0 4px; border-top: 2px solid #7d7170; background: linear-gradient(#fff 6px, #f0f0f0 6px); white-space: nowrap; }
    .menu { display: flex; margin-left: 13px; border-left: 2px dotted #c0c0c0; padding-left: 1px; }
    .menu button { width: 51px; height: 40px; border: 1px solid transparent; }
    .menu button.on { background: #b0d5f3; border-color: #0078d7; }
    .caption { flex: 1; padding: 0 0 8px 50px; font: 13px/20px "Liberation Mono", monospace; }
    .cjk { font-family: "Noto Sans CJK SC", sans-serif; font-size: 16px; }
    .wins { display: flex; align-items: center; gap: 27px; }
    .pin { margin-right: 9px; padding-bottom: 4px; }
    .body { flex: 1; display: flex; min-height: 0; padding: 0 1px 4px 4px; }
    .cats { flex: none; width: 149px; margin-right: 6px; padding: 2px 2px 18px; display: flex; flex-direction: column; justify-content: space-between; border: 1px solid #a0a0a0; box-shadow: 0 0 0 1px #fff; }
    .cat { display: flex; flex-direction: column; align-items: center; height: 65px; padding: 12px 0 0; gap: 1px; border-left: 7px solid transparent; white-space: nowrap; }
    .cat.on { border-left-color: #000; background: #cfcfcf; font-weight: 600; }
    .board { flex: 1; position: relative; overflow: hidden; border: 2px solid #6d7270; border-width: 2px 1px 1px 2px; border-right-color: #e0e0e0; border-bottom-color: #e0e0e0;
      background: linear-gradient(90deg, #f1e4e4 2px, transparent 2px) 11px 115px / 244px 151px, linear-gradient(#f1e4e4 2px, transparent 2px) 11px 115px / 244px 151px, #eaf7f3; }
    .wires { position: absolute; left: 0; top: 0; }
    .node { position: absolute; }
    .node > svg { position: absolute; left: 0; top: 0; overflow: visible; }
    .lab { position: absolute; font-size: 31px; line-height: 40px; margin-top: -24px; }
    .lab.in { left: 14px; }
    .lab.out { right: 9px; }
    .ttl { position: absolute; top: 0; bottom: 4px; width: 66px; writing-mode: vertical-rl; display: flex; align-items: center; justify-content: center; font: 900 41px/66px "Noto Sans", "Noto Sans CJK SC", sans-serif; white-space: nowrap; }
    .num { position: absolute; width: 160px; }
    .num > svg { position: absolute; left: 0; top: 0; overflow: visible; }
    .num label { position: relative; display: block; height: 32px; padding-left: 18px; font-size: 19px; line-height: 28px; }
    .field { position: relative; display: flex; height: 55px; padding-left: 4px; }
    .field input { width: 123px; border: 0; padding: 0 0 4px; background: none; text-align: center; font-size: 27px; outline: 0; }
    .spin { display: flex; flex-direction: column; width: 29px; margin-left: 2px; }
    .spin button { flex: 1; display: grid; place-items: center; }
  `];

  private shape(nd: GraphNode) {
    const edge = nd.picked ? "#8dc4ab" : "#a8a8a8";
    const id = nd.picked ? "leaf" : "mist";
    const band = nd.picked ? "bandLeaf" : "bandMist";
    const down = nd.outs.map((p) => `V${p.y - 12}l5 5V${p.y + 7}l-5 5`).join("");
    const up = [...nd.ins].reverse().map((p) => `V${p.y + 12}l4 -5V${p.y - 7}l-4 -5`).join("");
    return html`<svg width=${nd.w} height=${nd.h} fill="none">
      ${nd.picked ? svg`<path d="M7 7H${nd.w + 3}V${nd.h + 3}H7z" fill="#7d8fa0" />` : nothing}
      <path d="M2 2H${nd.w - 2}${down}V${nd.h - 2}H2${up}Z" fill="url(#${id})" stroke=${edge} stroke-width="4" />
      <rect x=${nd.band} y="4" width="66" height=${nd.h - 8} fill="url(#${band})" />
      ${nd.ins.filter((p) => p.on).map((p) => svg`<path d="M-2 ${p.y - 10}l5 5v10l-5 5" stroke="#eee" stroke-width="4" /><path d="M-3 ${p.y - 10}l5 6v8l-5 6" stroke=${edge} stroke-width="2" />`)}
      ${nd.outs.filter((p) => p.on).map((p) => svg`<path d="M${nd.w + 2} ${p.y - 14}l5 5v18l-5 5" stroke=${edge} stroke-width="2" />`)}
    </svg>`;
  }

  private graphNode(nd: GraphNode) {
    return html`<section class="node" style=${styleMap({ left: `${nd.x}px`, top: `${nd.y}px`, width: `${nd.w}px`, height: `${nd.h}px` })}>
      ${this.shape(nd)}
      ${nd.ins.map((p) => html`<span class="lab in" style=${styleMap({ top: `${p.y}px` })}>${p.label}</span>`)}
      ${nd.outs.map((p) => html`<span class="lab out" style=${styleMap({ top: `${p.y}px` })}>${p.label}</span>`)}
      <span class="ttl" style=${styleMap({ left: `${nd.band + 2}px` })}>${nd.title}</span>
    </section>`;
  }

  render() {
    const chev = (d: string) => html`<svg width="22" height="10" viewBox="0 0 22 10" fill="none"><path d=${d} stroke="#a8a8a8" stroke-width="4" /></svg>`;
    return html`${defs}
      <header class="bar">
        <svg class="ico" width="43" height="39" viewBox="0 0 32 32" preserveAspectRatio="none" fill="none">${mark}</svg>
        <nav class="menu"><button class="on">文件</button><button>编辑</button><button>帮助</button></nav>
        <div class="caption"><span class="cjk">盈建科数字化智能设计软件</span> Y-GAMA-C:\\Users\\z1845\\Desktop\\GAMA\\<span class="cjk">帮助文档制作</span>.pgz*</div>
        <div class="wins">
          <button class="pin">窗口置顶</button>
          <button aria-label="最小化"><svg class="ico" width="30" height="12" viewBox="0 0 30 12"><rect x="1" y="1" width="28" height="10" fill="#b9d0e8" stroke="#6d8fb3" /><path d="M2 2h26v4H2z" fill="#dbe8f5" /></svg></button>
          <button aria-label="最大化"><svg class="ico" width="30" height="28" viewBox="0 0 30 28"><rect x="1" y="1" width="28" height="26" fill="#fbfbfb" stroke="#4c8fb5" stroke-width="1.500" /><path d="M2 2h26v4H2z" fill="#2c84c9" /></svg></button>
          <button aria-label="关闭"><svg class="ico" width="30" height="30" viewBox="0 0 30 30"><path d="M2 5c3-5 6-4 8-1l5 6 5-6c2-3 6-4 8 1-1 4-4 6-6 10 3 4 6 6 6 10-2 5-6 4-8 1l-5-6-5 6c-2 3-5 4-8-1 1-4 4-6 6-10-2-4-5-6-6-10z" fill="url(#ruby)" stroke="#8d1014" /></svg></button>
        </div>
      </header>
      <div class="body">
        <nav class="cats">
          ${categories.map(([key, name]) => html`<button class=${classMap({ cat: true, on: name === this.active })} @click=${() => (this.active = name)}>${icon(24, n[key])}<span>${name}</span></button>`)}
        </nav>
        <main class="board">
          <svg class="wires" width="1114" height="1323" fill="none">
            <defs>
              <linearGradient id="fade" gradientUnits="userSpaceOnUse" x1="834" y1="0" x2="929" y2="0"><stop offset="0" stop-color="#969c99" /><stop offset="1" stop-color="#8dc4ab" /></linearGradient>
              <linearGradient id="mist" x1="0" y1="0" x2=".6" y2="1"><stop offset="0" stop-color="#fff" /><stop offset="1" stop-color="#c9d9f6" /></linearGradient>
              <linearGradient id="leaf" x1="0" y1="0" x2=".6" y2="1"><stop offset="0" stop-color="#fcfefd" /><stop offset="1" stop-color="#b9e7d0" /></linearGradient>
              <linearGradient id="bandMist" x1="0" y1="0" x2=".4" y2="1"><stop offset="0" stop-color="#e0eafb" /><stop offset="1" stop-color="#82a6ee" /></linearGradient>
              <linearGradient id="bandLeaf" x1="0" y1="0" x2=".4" y2="1"><stop offset="0" stop-color="#d4e4f0" /><stop offset="1" stop-color="#7ba1ec" /></linearGradient>
            </defs>
            <path d="M460 728C564 728 153 415 255 415" stroke="#6e6e6e" stroke-width="2" />
            <path d="M460 728H561M180 704L234 703M180 796L234 799M178 895L234 894" stroke="#6e6e6e" stroke-width="2.400" />
            <path d="M832 728H931" stroke="url(#fade)" stroke-width="5" />
          </svg>
          ${nodes.map((nd) => this.graphNode(nd))}
          ${panels.map((p, i) => html`<div class="num" style=${styleMap({ left: `${p.x}px`, top: `${p.y}px` })}>
            <svg width="160" height="91" fill="none" stroke="#a8a8a8">
              <path d="M5 30V1H96l30 29" fill="#fff" stroke-width="1.500" />
              <path d="M2 30H158V54l4 3v16l-4 4V89H2V77l5-6V57l-5-6Z" fill="#f8f9ff" stroke-width="4" />
              <path d="M129 30V89M129 59.500H158" stroke-width="4" />
              <path d="M163 46l4 5v19l-4 5" stroke-width="2" />
            </svg>
            <label for="n${i}">文字白板</label>
            <div class="field">
              <input id="n${i}" .value=${p.value} />
              <div class="spin"><button aria-label="增加">${chev("M1 8l10-5 10 5")}</button><button aria-label="减少">${chev("M1 2l10 5 10-5")}</button></div>
            </div>
          </div>`)}
        </main>
      </div>`;
  }
}

@customElement("app-root")
export class AppRoot extends LitElement {
  static styles = css`
    :host { display: block; }
    .desk { display: grid; grid-template-columns: minmax(0, 1280fr) minmax(0, 1276fr); min-height: 100vh; }
  `;
  render() {
    return html`<div class="desk"><model-window></model-window><node-window></node-window></div>`;
  }
}
